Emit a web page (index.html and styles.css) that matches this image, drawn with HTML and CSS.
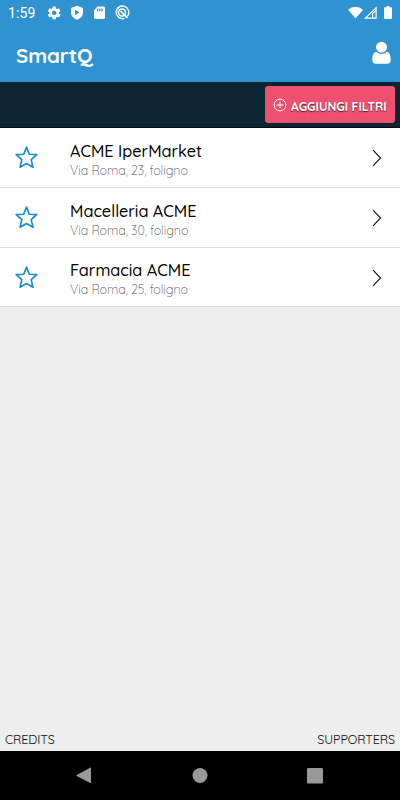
FILE: index.html
```html
<!DOCTYPE html>
<html lang="it">
<head>
<meta charset="utf-8">
<title>SmartQ</title>
<link rel="stylesheet" href="styles.css">
</head>
<body>
<svg class="defs" aria-hidden="true">
  <symbol id="star" viewBox="0 0 24 24"><path d="M12 2 14.700 8.900 21.900 9.300 16.500 14 18.200 21.300 12 17.800 5.800 21.300 7.500 14 2.100 9.300 9.300 8.900Z" fill="none" stroke="#168dd2" stroke-width="1.600" stroke-linejoin="round"/></symbol>
  <symbol id="chevron" viewBox="0 0 10 18"><path d="M1 1.200 8.600 9 1 16.800" fill="none" stroke="#111" stroke-width="1.100"/></symbol>
</svg>
<div class="screen">
  <div class="status">
    <span class="clock">1:59</span>
    <svg class="status-left" width="84" height="16" viewBox="0 0 84 16" fill="#fff">
      <g transform="translate(-1.500 .2) scale(.64)"><path d="M19.400 13a7.500 7.500 0 0 0 0-2l2.100-1.600c.2-.2.200-.4.100-.6l-2-3.500c-.1-.2-.4-.3-.6-.2l-2.500 1a7 7 0 0 0-1.700-1l-.4-2.600c0-.3-.2-.4-.4-.4h-4c-.3 0-.5.200-.5.400l-.4 2.600a7 7 0 0 0-1.700 1l-2.500-1c-.2-.1-.5 0-.6.200l-2 3.500c-.1.200 0 .5.100.6L4.600 11a7.500 7.500 0 0 0 0 2l-2.100 1.600c-.2.200-.2.400-.1.600l2 3.500c.1.200.4.300.6.200l2.500-1a7 7 0 0 0 1.700 1l.4 2.600c0 .2.200.4.500.4h4c.2 0 .4-.2.400-.4l.4-2.600a7 7 0 0 0 1.700-1l2.500 1c.2.100.5 0 .6-.2l2-3.500c.1-.2 0-.5-.1-.6ZM12 15.500a3.500 3.500 0 1 1 0-7 3.500 3.500 0 0 1 0 7Z"/></g>
      <path fill-rule="evenodd" d="M29 .8 35 3v4.500c0 3.500-2.600 6-6 7.300-3.400-1.300-6-3.800-6-7.300V3ZM27 4.800v5.400L31.500 7.500Z"/>
      <path fill-rule="evenodd" d="M49.500 1.500h5.900q1.600 0 1.600 1.400v9.700q0 1.400-1.400 1.400h-8.200Q46 14 46 12.600V5.300ZM49 3.500v2.700h1.300V3.500Zm2.200 0v2.700h1.300V3.500Zm2.200 0v2.700h1.300V3.500Z"/>
      <g fill="none" stroke="#fff"><path d="M79.200 11.500A6.300 6.300 0 1 0 76.500 13.300" stroke-width="1.400"/><circle cx="74" cy="7.600" r="3.500" stroke-width="1.500"/><path d="m72.500 6 6.800 6.800" stroke-width="1.700"/></g>
    </svg>
    <svg class="status-right" width="48" height="16" viewBox="0 0 48 16" fill="#fff">
      <path d="M0 3.700Q7.500-2.200 15 3.700L7.500 12.500Z"/>
      <path fill-rule="evenodd" d="M28.700.3V12.700H16ZM27.500 3.300 18.800 11.600H24V7.200L27.500 4ZM25.200 7.700v3.900h2.300V5.400Z"/>
      <path d="M38.500 1.200V0h3v1.200H43q1 0 1 1V12q0 1-1 1h-6q-1 0-1-1V2.200q0-1 1-1Z"/>
    </svg>
  </div>
  <header class="header">
    <h1 class="brand">SmartQ</h1>
    <svg class="user" width="19" height="24" viewBox="0 0 19 24" fill="#fff"><path d="M4.300 10.700C1.500 11.400.3 13.800.3 18.700c0 2.700 1.200 4 3.500 4h11.400c2.300 0 3.500-1.300 3.500-4 0-4.900-1.200-7.300-4-8a7 7 0 0 1-10.400 0Z"/><circle cx="9.500" cy="6.200" r="5.500"/></svg>
  </header>
  <div class="toolbar">
    <button class="filter">
      <svg width="14" height="14" viewBox="0 0 14 14" fill="none" stroke="#fff"><circle cx="7" cy="7" r="5.900"/><path d="M7 3.700v6.600M3.700 7h6.600"/></svg>
      <span>AGGIUNGI FILTRI</span>
    </button>
  </div>
  <main class="list">
    <div class="row">
      <svg class="star"><use href="#star"/></svg>
      <div class="info"><div class="name">ACME IperMarket</div><div class="address">Via Roma, 23, foligno</div></div>
      <svg class="chevron"><use href="#chevron"/></svg>
    </div>
    <div class="row">
      <svg class="star"><use href="#star"/></svg>
      <div class="info"><div class="name">Macelleria ACME</div><div class="address">Via Roma, 30, foligno</div></div>
      <svg class="chevron"><use href="#chevron"/></svg>
    </div>
    <div class="row">
      <svg class="star"><use href="#star"/></svg>
      <div class="info"><div class="name">Farmacia ACME</div><div class="address">Via Roma, 25, foligno</div></div>
      <svg class="chevron"><use href="#chevron"/></svg>
    </div>
  </main>
  <footer class="footer"><span>CREDITS</span><span>SUPPORTERS</span></footer>
  <nav class="nav">
    <svg width="400" height="49" viewBox="0 0 400 49" fill="#999"><path d="M76.700 24 90.200 16.700q.8-.4.800.5v14.200q0 .9-.8.500L76.700 25q-.8-.5 0-1Z"/><circle cx="200" cy="24.500" r="7.500"/><rect x="307" y="17" width="16" height="15.500" rx="1"/></svg>
  </nav>
</div>
</body>
</html>
```
FILE: styles.css
```css
* { box-sizing: border-box; }
body { margin: 0; font-family: Quicksand, Lato, sans-serif; }
.defs { position: absolute; width: 0; height: 0; }
.screen { width: 400px; height: 800px; display: flex; flex-direction: column; background: #eee; overflow: hidden; }
svg { display: block; flex: none; }
.status { height: 26px; background: #2f93d2; color: #fff; display: flex; align-items: flex-start; padding: 5px 4px 0 8px; }
.clock { font: 400 14px/16px Roboto, sans-serif; width: 40px; letter-spacing: .1px; }
.status-right { margin-left: auto; margin-top: 1px; }
.header { height: 56px; background: #2f93d2; display: flex; align-items: center; justify-content: space-between; padding: 0 9.500px 0 16px; color: #fff; }
.brand { margin: 1px 0 0; font-size: 20.500px; line-height: 28px; font-weight: 700; letter-spacing: -.05px; }
.user { margin-bottom: 2px; }
.toolbar { height: 46px; background: #0c2533; border-bottom: 1px solid #030c12; display: flex; justify-content: flex-end; padding: 4px 5px 0 0; }
.filter { width: 130px; height: 37px; border: 0; border-radius: 3px; background: #ed516f; color: #fff; display: flex; align-items: center; gap: 4px; padding: 0 0 0 8px; font: 700 12px/16px Quicksand, Lato, sans-serif; letter-spacing: .08px; text-shadow: 0 1px 1px rgba(0,0,0,.65); white-space: nowrap; }
.filter span { padding-top: 5px; }
.list { background: #fff; }
.row { height: 60px; display: flex; align-items: center; border-bottom: 1px solid #dedede; padding: 0 18px 0 14px; }
.row:last-child { height: 59px; }
.star { width: 25px; height: 25px; margin-right: 31px; }
.info { flex: 1; white-space: nowrap; padding-top: 4px; }
.name { font-size: 16.300px; line-height: 21px; font-weight: 500; color: #000; }
.address { font-size: 12.500px; line-height: 17px; font-weight: 300; letter-spacing: -.07px; color: #555; }
.chevron { width: 10px; height: 18px; margin-top: 1px; }
.footer { margin-top: auto; height: 24px; display: flex; justify-content: space-between; padding: 4px 5px 0; font-size: 12.500px; line-height: 17px; letter-spacing: -.1px; color: #111; }
.nav { height: 49px; background: #000; }
```
